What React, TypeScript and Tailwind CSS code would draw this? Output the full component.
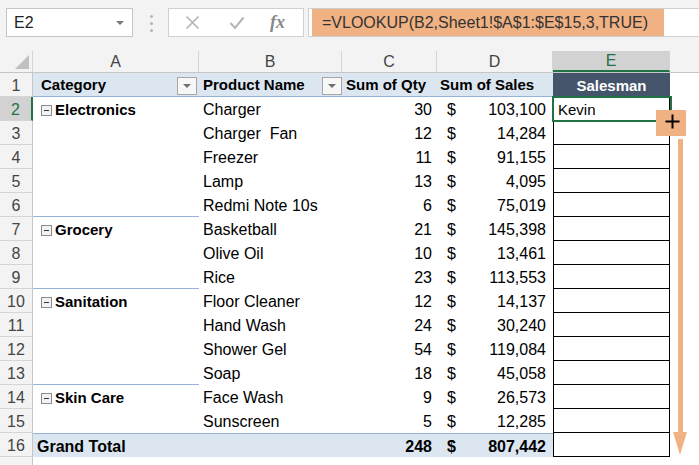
import React from "react";

type Row = {
  n: number;
  cat?: string;
  prod: string;
  qty: number;
  sales: string;
  groupEnd?: boolean;
};

const rows: Row[] = [
  { n: 2, cat: "Electronics", prod: "Charger", qty: 30, sales: "103,100" },
  { n: 3, prod: "Charger  Fan", qty: 12, sales: "14,284" },
  { n: 4, prod: "Freezer", qty: 11, sales: "91,155" },
  { n: 5, prod: "Lamp", qty: 13, sales: "4,095" },
  { n: 6, prod: "Redmi Note 10s", qty: 6, sales: "75,019", groupEnd: true },
  { n: 7, cat: "Grocery", prod: "Basketball", qty: 21, sales: "145,398" },
  { n: 8, prod: "Olive Oil", qty: 10, sales: "13,461" },
  { n: 9, prod: "Rice", qty: 23, sales: "113,553", groupEnd: true },
  { n: 10, cat: "Sanitation", prod: "Floor Cleaner", qty: 12, sales: "14,137" },
  { n: 11, prod: "Hand Wash", qty: 24, sales: "30,240" },
  { n: 12, prod: "Shower Gel", qty: 54, sales: "119,084" },
  { n: 13, prod: "Soap", qty: 18, sales: "45,058", groupEnd: true },
  { n: 14, cat: "Skin Care", prod: "Face Wash", qty: 9, sales: "26,573" },
  { n: 15, prod: "Sunscreen", qty: 5, sales: "12,285" },
];

const font = { fontFamily: '"Liberation Sans", Arial, sans-serif' };

function RowHead({ n, active }: { n?: number; active?: boolean }) {
  return (
    <div
      className={
        "flex h-full w-[33px] shrink-0 items-center justify-center border-b border-[#d4d4d4] pt-[2px] text-[16px] " +
        (active
          ? "border-r-2 border-r-[#217346] bg-[#d2d2d2] text-[#217346]"
          : "border-r border-r-[#c6c6c6] bg-[#f3f3f3] text-[#444]")
      }
    >
      {n}
    </div>
  );
}

function SortButton() {
  return (
    <div className="flex h-[18px] w-[20px] shrink-0 items-center justify-center border border-[#a6a6a6] bg-[#f7f7f7]">
      <div className="h-0 w-0 border-x-[4px] border-t-[4px] border-x-transparent border-t-[#707070]" />
    </div>
  );
}

function Collapse() {
  return (
    <div className="mr-[3px] flex h-[11px] w-[11px] shrink-0 items-center justify-center border border-[#8c8c8c] bg-[#f2f2f2]">
      <div className="h-px w-[5px] bg-[#333]" />
    </div>
  );
}

function ECell({ children, top }: { children?: React.ReactNode; top?: boolean }) {
  return (
    <div
      className={
        "flex h-full w-[117px] shrink-0 items-center border-x border-b border-black bg-white pl-[4px] pt-[2px] text-[15px] " +
        (top ? "border-t" : "")
      }
    >
      {children}
    </div>
  );
}

export default function App() {
  return (
    <div className="relative h-[465px] w-[699px] overflow-hidden bg-white text-[16px] text-black" style={font}>
      {/* formula bar */}
      <div className="flex h-[50px] items-start bg-[#f3f3f3] pt-[8px]">
        <div className="ml-[6px] flex h-[29px] w-[127px] items-center justify-between border border-[#c6c6c6] bg-white pl-[7px] pr-[8px] text-[16px] text-[#222]">
          <span>E2</span>
          <div className="h-0 w-0 border-x-[4px] border-t-[4px] border-x-transparent border-t-[#777]" />
        </div>
        <div className="ml-[17px] mt-[7px] flex w-[4px] flex-col gap-[4px]">
          <div className="h-[3px] w-[3px] rounded-full bg-[#b5b5b5]" />
          <div className="h-[3px] w-[3px] rounded-full bg-[#b5b5b5]" />
          <div className="h-[3px] w-[3px] rounded-full bg-[#b5b5b5]" />
        </div>
        <div className="ml-[14px] flex h-[29px] w-[136px] items-center border border-[#d0d0d0] bg-white">
          <svg className="ml-[16px]" width="15" height="15" viewBox="0 0 15 15">
            <path d="M1.5 1.5 L13.5 13.5 M13.5 1.5 L1.5 13.5" stroke="#b4b4b4" strokeWidth="1.6" />
          </svg>
          <svg className="ml-[29px]" width="16" height="14" viewBox="0 0 16 14">
            <path d="M1.5 7 L6 12 L14.5 1.5" stroke="#b4b4b4" strokeWidth="2" fill="none" />
          </svg>
          <span
            className="ml-[25px] text-[18px] font-bold italic text-[#888]"
            style={{ fontFamily: '"Liberation Serif", "Times New Roman", serif' }}
          >
            fx
          </span>
        </div>
        <div className="ml-[4px] flex h-[29px] flex-1 items-stretch border border-r-0 border-[#d0d0d0] bg-white pl-[3px]">
          <div className="flex w-[352px] items-center bg-[#f0b183] pl-[10px] text-[16px] text-[#333]">
            =VLOOKUP(B2,Sheet1!$A$1:$E$15,3,TRUE)
          </div>
        </div>
      </div>

      {/* column headers */}
      <div className="flex h-[23px] border-b border-[#c6c6c6] bg-[#f3f3f3] pt-[1px] text-[16px] text-[#444]">
        <div className="relative h-full w-[33px] shrink-0 border-r border-[#d4d4d4]">
          <div className="absolute bottom-[3px] right-[3px] h-0 w-0 border-b-[14px] border-l-[14px] border-l-transparent border-b-[#c0c0c0]" />
        </div>
        <div className="flex w-[166px] shrink-0 items-center justify-center border-r border-[#d4d4d4]">A</div>
        <div className="flex w-[143px] shrink-0 items-center justify-center border-r border-[#d4d4d4]">B</div>
        <div className="flex w-[95px] shrink-0 items-center justify-center border-r border-[#d4d4d4]">C</div>
        <div className="flex w-[116px] shrink-0 items-center justify-center border-r border-[#d4d4d4]">D</div>
        <div className="flex w-[117px] shrink-0 items-center justify-center border-b-2 border-r border-[#217346] border-r-[#d4d4d4] bg-[#d2d2d2] text-[#217346]">
          E
        </div>
        <div className="flex-1" />
      </div>

      {/* row 1: pivot header */}
      <div className="flex h-[24px] text-[15px]">
        <RowHead n={1} />
        <div className="flex w-[520px] shrink-0 border-b border-[#95b3d7] bg-[#dce6f1] pt-[2px] font-bold">
          <div className="flex w-[166px] shrink-0 items-center justify-between pl-[8px] pr-[2px]">
            <span>Category</span>
            <SortButton />
          </div>
          <div className="flex w-[143px] shrink-0 items-center justify-between pl-[4px]">
            <span>Product Name</span>
            <SortButton />
          </div>
          <div className="flex w-[95px] shrink-0 items-center whitespace-nowrap pl-[4px]">Sum of Qty</div>
          <div className="flex w-[116px] shrink-0 items-center whitespace-nowrap pl-[3px]">Sum of Sales</div>
        </div>
        <div className="flex w-[117px] shrink-0 items-center justify-center bg-[#44546a] pt-[2px] font-bold text-white">
          Salesman
        </div>
      </div>

      {/* data rows */}
      {rows.map((r) => (
        <div key={r.n} className="flex h-[24px]">
          <RowHead n={r.n} active={r.n === 2} />
          <div
            className={
              "flex w-[166px] shrink-0 items-center pl-[8px] pt-[2px] text-[15px] font-bold " +
              (r.groupEnd ? "border-b border-[#95b3d7]" : "")
            }
          >
            {r.cat && (
              <>
                <Collapse />
                <span>{r.cat}</span>
              </>
            )}
          </div>
          <div className="flex w-[143px] shrink-0 items-center whitespace-pre pl-[4px] pt-[2px]">{r.prod}</div>
          <div className="flex w-[95px] shrink-0 items-center justify-end pr-[5px] pt-[2px]">{r.qty}</div>
          <div className="flex w-[116px] shrink-0 items-center justify-between pl-[10px] pr-[7px] pt-[2px]">
            <span>$</span>
            <span>{r.sales}</span>
          </div>
          <ECell top={r.n === 2}>{r.n === 2 ? "Kevin" : null}</ECell>
        </div>
      ))}

      {/* row 16: grand total */}
      <div className="flex h-[24px]">
        <RowHead n={16} />
        <div className="flex w-[520px] shrink-0 border-t border-[#95b3d7] bg-[#dce6f1] pt-[2px] font-bold">
          <div className="flex w-[166px] shrink-0 items-center pl-[4px]">Grand Total</div>
          <div className="w-[143px] shrink-0" />
          <div className="flex w-[95px] shrink-0 items-center justify-end pr-[5px]">248</div>
          <div className="flex w-[116px] shrink-0 items-center justify-between pl-[10px] pr-[7px]">
            <span>$</span>
            <span>807,442</span>
          </div>
        </div>
        <ECell />
      </div>

      {/* row 17 (partial) */}
      <div className="flex h-[24px]">
        <RowHead />
      </div>

      {/* selection, fill handle and drag arrow */}
      <div className="absolute left-[552px] top-[96px] h-[26px] w-[120px] border-2 border-[#217346]" />
      <div className="absolute left-[656px] top-[110px] h-[26px] w-[30px] bg-[#f0b183]" />
      <svg className="absolute left-[665px] top-[114px]" width="15" height="15" viewBox="0 0 15 15">
        <path d="M7.5 0.5 V14.5 M0.5 7.5 H14.5" stroke="#000" strokeWidth="2" />
      </svg>
      <div className="absolute left-[678px] top-[139px] h-[296px] w-[5px] bg-[#f0b183]" />
      <div className="absolute left-[673px] top-[432px] h-0 w-0 border-x-[7.5px] border-t-[23px] border-x-transparent border-t-[#f0b183]" />
    </div>
  );
}
